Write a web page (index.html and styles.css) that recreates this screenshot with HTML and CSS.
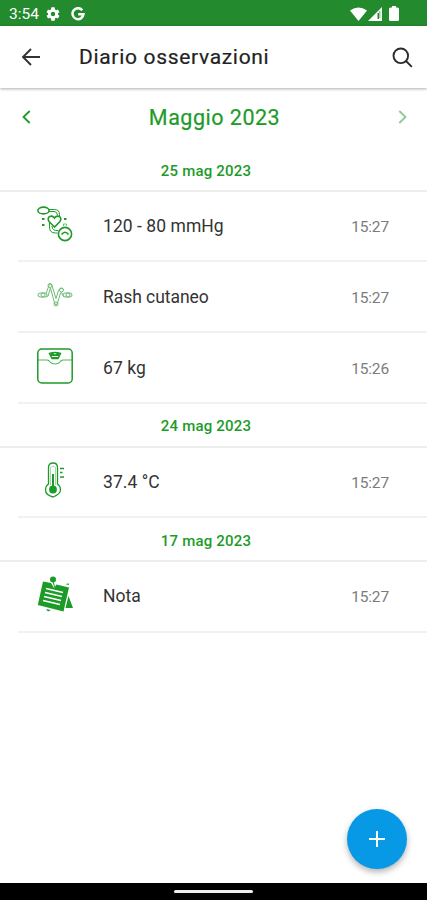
FILE: index.html
```html
<!DOCTYPE html>
<html lang="it">
<head>
<meta charset="utf-8">
<title>Diario osservazioni</title>
<link rel="stylesheet" href="styles.css">
</head>
<body>
<div class="screen">
  <div class="status">
    <span class="clock">3:54</span>
    <svg class="gear" width="16" height="16" viewBox="0 0 24 24"><path fill="#fff" fill-rule="evenodd" d="M19.4 13a7.500 7.500 0 0 0 0-2l2.300-1.800-2.300-4-2.800 1.100a7 7 0 0 0-1.700-1L14.500 2h-5l-.5 3.300a7 7 0 0 0-1.700 1L4.600 5.200l-2.300 4L4.600 11a7.500 7.500 0 0 0 0 2l-2.300 1.800 2.300 4 2.700-1.100a7 7 0 0 0 1.700 1l.5 3.300h5l.5-3.300a7 7 0 0 0 1.700-1l2.700 1.100 2.300-4zM12 15.300a3.300 3.300 0 1 1 0-6.600 3.300 3.300 0 0 1 0 6.600z"/></svg>
    <svg class="google" width="14" height="14" viewBox="0 0 14 14"><path fill="none" stroke="#fff" stroke-width="2.500" d="M11.300 3.200A5.500 5.500 0 1 0 12.500 7.200H7.200"/></svg>
    <span class="signals">
      <svg width="17" height="14" viewBox="0 0 17 14"><path fill="#fff" d="M0 3.500Q8.500-2.500 17 3.500L8.500 14z"/></svg>
      <svg width="14" height="14" viewBox="0 0 14 14"><path fill="#fff" d="M14 0v14H0z"/><path fill="#238a2d" d="M9.500 6h1.500v6H9.500z"/><path fill="#238a2d" opacity=".45" d="M11 4h1.500v7H11z"/></svg>
      <svg class="battery" width="10" height="15" viewBox="0 0 10 15"><path fill="#fff" d="M3 0h4v1.500h1.500Q10 1.500 10 3v10.500Q10 15 8.500 15h-7Q0 15 0 13.500V3q0-1.500 1.500-1.500H3z"/></svg>
    </span>
  </div>
  <header class="appbar">
    <svg class="back" width="20" height="18" viewBox="0 0 20 18"><path fill="none" stroke="#333" stroke-width="1.900" d="M19 9H2M10 1L2 9l8 8"/></svg>
    <h1>Diario osservazioni</h1>
    <svg class="search" width="21" height="21" viewBox="0 0 21 21"><g fill="none" stroke="#2b2b2b" stroke-width="1.900"><circle cx="8.800" cy="8.800" r="7.300"/><path d="M14 14l5.800 5.800"/></g></svg>
  </header>
  <nav class="month">
    <svg width="9" height="14" viewBox="0 0 9 14"><path fill="none" stroke="#1d9b28" stroke-width="1.800" d="M7.700 1L1.500 7l6.200 6"/></svg>
    <h2>Maggio 2023</h2>
    <svg width="9" height="14" viewBox="0 0 9 14"><path fill="none" stroke="#8bcb91" stroke-width="1.800" d="M1.300 1l6.200 6-6.200 6"/></svg>
  </nav>
  <main>
    <h3 class="first">25 mag 2023</h3>
    <div class="row">
      <svg class="icon" width="36" height="36" viewBox="0 0 36 36"><g fill="none" stroke="#1d9b28" stroke-width="1.600"><ellipse cx="6.500" cy="4.500" rx="5.600" ry="3.400"/><path d="M12 3.500h5.500q5 0 5 5v1.500M12 5.500h5q3.500 0 3.500 4" stroke-width="1"/><path d="M17.500 21l-5.500-5.500c-3-5 3-7 5.500-3.500 2.500-3.500 8.500-1.500 5.500 3.500z"/><path d="M12.500 17v4q0 6 6 6h2M15 20q0 5 6 4.500" stroke-width="1"/><circle cx="28" cy="28" r="6.600"/><path d="M24.500 28.500q3.500-4.500 7 0"/><path stroke-width="1" opacity=".6" d="M26.500 20v-2h3v2"/></g><path fill="#1d9b28" d="M5 12h2.500v2H5zm0 6h2.500v2H5zm22-6h2.500v2H27z"/></svg>
      <span class="label">120 - 80 mmHg</span><time>15:27</time>
    </div>
    <div class="row">
      <svg class="icon" width="36" height="36" viewBox="0 0 36 36"><g fill="none" stroke="#6dba74"><rect x="1" y="16" width="9" height="4" rx="2"/><circle cx="6" cy="18" r="2"/><path d="M9 16.500l3-8q1-3 3 0l4 13 2.500-8q2-4 5-1M9 20l2-1 2.500-8 4 15q1.500 4 3 0l3-10q1-2 2 2l2 2"/><circle cx="13" cy="8.500" r="2"/><circle cx="24.500" cy="13" r="2"/><circle cx="19" cy="27" r="2"/><rect x="26" y="16" width="9" height="4" rx="2"/><circle cx="31" cy="18" r="2"/></g></svg>
      <span class="label tight">Rash cutaneo</span><time>15:27</time>
    </div>
    <div class="row">
      <svg class="icon" width="36" height="36" viewBox="0 0 36 36"><g fill="none" stroke="#1d9b28" stroke-width="1.500"><rect x=".8" y="1" width="34.400" height="34" rx="4"/><path stroke-width="1.200" opacity=".75" d="M1 12h9q2 0 3 2 1.500 2 5 2t5-2q1-2 3-2h9"/><path d="M12.500 5.500q5.500-2 11 0l-2.500 5h-6z"/></g><path fill="#1d9b28" d="M13 5h3l2 1.500L20 5h3l-1 3h-8zM15 9h6v2h-6z"/></svg>
      <span class="label">67 kg</span><time>15:26</time>
    </div>
    <h3>24 mag 2023</h3>
    <div class="row">
      <svg class="icon" width="36" height="36" viewBox="0 0 36 36"><g fill="none" stroke="#1d9b28" stroke-width="1.300"><path d="M11.500 22V5.500q0-4.500 4.500-4.500t4.500 4.500V22q3 2 3 6t-7.500 7q-7.500-2-7.500-7 0-4 3-6z"/><path d="M13.500 23V5.500q2.500-3 5 0V23" stroke-width=".8" opacity=".5"/><path d="M23 6.500h4M23 10.500h2.500M23 15h4"/></g><circle cx="16" cy="27.500" r="3.900" fill="#1d9b28"/><path fill="#1d9b28" d="M15 12h2v13h-2z"/></svg>
      <span class="label">37.4 °C</span><time>15:27</time>
    </div>
    <h3>17 mag 2023</h3>
    <div class="row">
      <svg class="icon" width="36" height="36" viewBox="0 0 36 36"><g fill="#1d9b28"><path d="M6 5.500l8 1.500 3 5 2.500-3.500L32 11.500l-5.500 24L.8 29z"/><circle cx="16" cy="3.500" r="3"/><path d="M31.500 20l4.500 12h-7.500zM28 8l4-.500v1.500zM9 33l5 1-3 1.500z"/></g><path fill="none" stroke="#1d9b28" d="M16 5l1.500 6"/><path fill="none" stroke="#fff" stroke-width="1.700" d="M9 12.500l17 4M8 16.500l17 4M7 20.500l17 4M6 24.500l17 4"/></svg>
      <span class="label">Nota</span><time>15:27</time>
    </div>
  </main>
  <button class="fab" aria-label="Aggiungi"><svg width="18" height="18" viewBox="0 0 18 18"><path stroke="#fff" stroke-width="2" d="M9 1v16M1 9h16"/></svg></button>
  <footer><span></span></footer>
</div>
</body>
</html>
```
FILE: styles.css
```css
* { box-sizing: border-box; }
body { margin: 0; background: #fff; font-family: Roboto, "Liberation Sans", sans-serif; }
h1, h2, h3 { margin: 0; }
svg { display: block; flex: none; }
.screen { position: relative; display: flex; flex-direction: column; width: 427px; height: 900px; overflow: hidden; }
.status { display: flex; align-items: center; height: 26px; padding: 1px 28px 0 9px; background: #238a2d; color: #fff; }
.clock { width: 36px; font-size: 15.500px; }
.google { margin-left: 10px; }
.signals { display: flex; align-items: center; gap: 1px; margin-left: auto; }
.battery { margin-left: 6px; }
.appbar { display: flex; align-items: center; height: 62px; padding: 0 14px 0 21px; box-shadow: 0 1px 3px rgba(0, 0, 0, .32); }
.appbar h1 { margin-left: 38px; font-size: 21px; font-weight: 400; letter-spacing: .68px; color: #222; -webkit-text-stroke: .2px #222; }
.search { margin-left: auto; }
.month { display: flex; align-items: center; justify-content: space-between; height: 60px; padding: 0 20px 2px 22px; }
.month h2 { font-size: 21.500px; font-weight: 400; letter-spacing: .5px; color: #1d9b28; -webkit-text-stroke: .2px #1d9b28; }
h3 { display: flex; align-items: center; justify-content: center; height: 43.600px; padding: 3px 15px 0 0; border-bottom: 2px solid #ededed; font-size: 15px; font-weight: 500; letter-spacing: .2px; color: #1d9b28; }
h3.first { padding-top: 5px; }
.row { display: flex; align-items: center; height: 70.800px; margin-left: 18px; padding: 0 38px 0 19px; border-bottom: 2px solid #f1f1f1; }
.icon { margin-bottom: 4px; }
.label { margin-left: 30px; font-size: 17.500px; letter-spacing: .05px; color: #333; }
.label.tight { letter-spacing: -.05px; }
.row time { margin-left: auto; padding-top: 2px; font-size: 15.500px; letter-spacing: -.15px; color: #7c7c7c; }
.fab { position: absolute; left: 347px; top: 809px; display: flex; align-items: center; justify-content: center; width: 60px; height: 60px; padding: 0; border: 0; border-radius: 50%; background: #0799e6; box-shadow: 0 3px 6px rgba(0, 0, 0, .3); }
footer { display: flex; align-items: center; justify-content: center; height: 17px; margin-top: auto; background: #000; }
footer span { width: 79px; height: 3px; border-radius: 2px; background: #eee; }
```
